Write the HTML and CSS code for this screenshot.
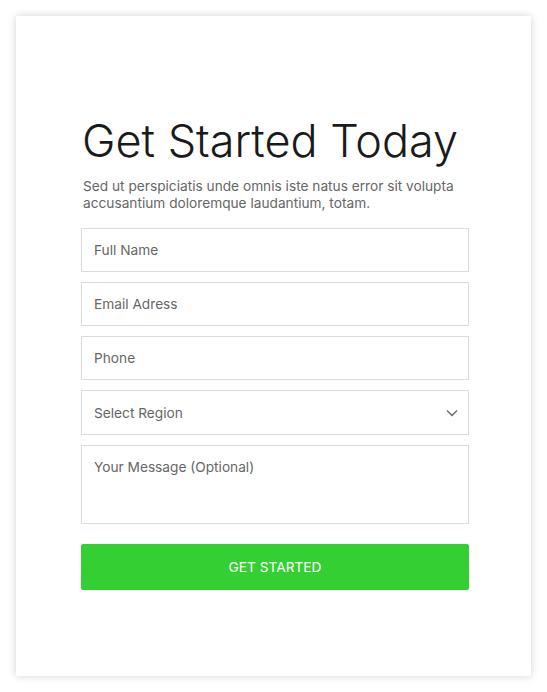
FILE: index.html
```html
<!DOCTYPE html>
<html>
	<head>
		<meta charset="UTF-8">
		<title>Get Started Today</title>
		<link rel="stylesheet" href="styles.css">
	</head>
	<body>
		<section class="card">
			<h1 class="title">Get Started Today</h1>
			<p class="lead">Sed ut perspiciatis unde omnis iste natus error sit volupta accusantium doloremque laudantium, totam.</p>
			<form class="form" onsubmit="return false;">
				<input class="field" type="text" placeholder="Full Name">
				<input class="field" type="email" placeholder="Email Adress">
				<input class="field" type="tel" placeholder="Phone">
				<div class="select-wrap">
					<select class="field select">
						<option>Select Region</option>
					</select>
					<svg class="chevron" width="12" height="8" viewBox="0 0 12 8"><path d="M1 1.5l5 5 5-5" fill="none" stroke="#666" stroke-width="1.3"/></svg>
				</div>
				<textarea class="field message" placeholder="Your Message (Optional)"></textarea>
				<button class="submit" type="submit">GET STARTED</button>
			</form>
		</section>
	</body>
</html>
```

FILE: styles.css
```css
body {
	margin: 0;
	padding: 16px;
	background: #fff;
	font-family: Inter, "Noto Sans", sans-serif;
}
.card {
	width: 515px;
	height: 660px;
	box-sizing: border-box;
	padding: 98px 62px 0 65px;
	background: #fff;
	box-shadow: 0 0 8px rgba(0, 0, 0, 0.18);
}
.title {
	margin: 0 0 0 1px;
	font-size: 45px;
	font-weight: 300;
	line-height: 54px;
	color: #1a1a1a;
	letter-spacing: 0;
}
.lead {
	margin: 10px 0 16px 2px;
	font-size: 13.7px;
	line-height: 17px;
	color: #666;
}
.form {
	display: flex;
	flex-direction: column;
	gap: 10px;
}
.field {
	display: block;
	width: 100%;
	height: 44px;
	box-sizing: border-box;
	margin: 0;
	padding: 0 12px;
	border: 1px solid #dcdcdc;
	border-radius: 0;
	background: #fff;
	font-family: inherit;
	font-size: 13.7px;
	color: #666;
	outline: none;
}
.field::placeholder {
	color: #666;
}
.select-wrap {
	position: relative;
}
.select {
	height: 45px;
	appearance: none;
	-webkit-appearance: none;
}
.chevron {
	position: absolute;
	right: 11px;
	top: 19px;
	pointer-events: none;
}
.message {
	height: 79px;
	padding-top: 13px;
	resize: none;
}
.submit {
	margin-top: 10px;
	height: 46px;
	border: 0;
	border-radius: 2px;
	background: #33cf33;
	color: #fff;
	font-family: inherit;
	font-size: 13.7px;
	cursor: pointer;
}
```
